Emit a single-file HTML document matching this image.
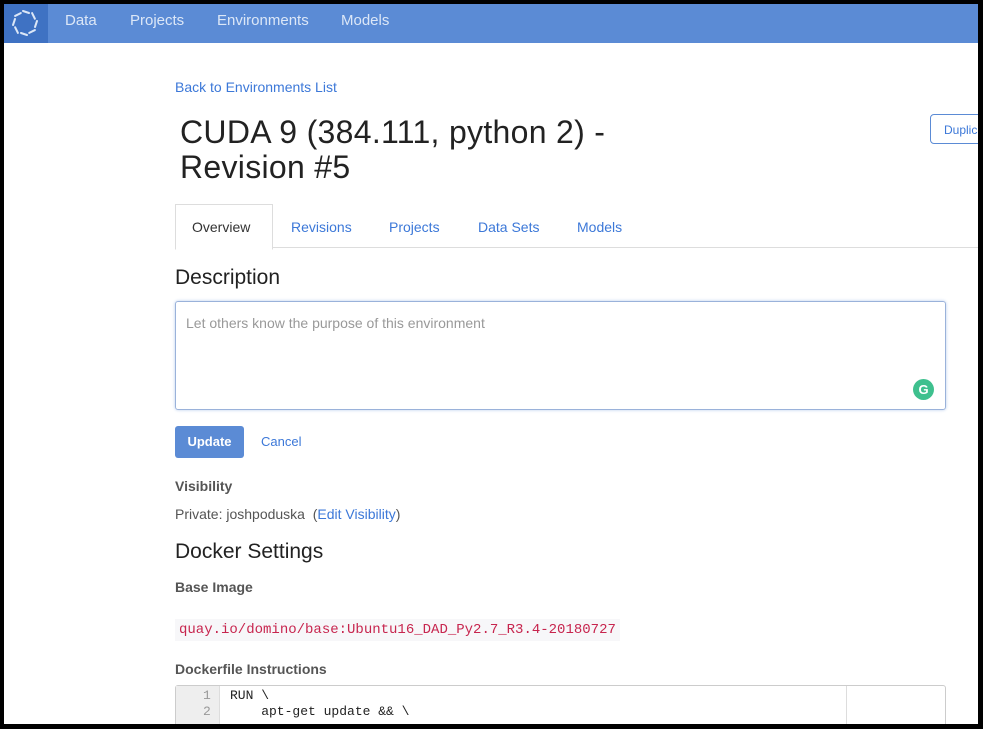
<!DOCTYPE html><html><head><style>
body{margin:0;width:983px;height:729px;background:#000;overflow:hidden;font-family:"Liberation Sans",sans-serif;position:relative}
.pg{position:absolute;left:4px;top:4px;width:974px;height:720px;background:#fff;overflow:hidden}
.nav{position:absolute;left:0;top:0;width:974px;height:39px;background:#5b8bd5}
.logo{position:absolute;left:0;top:0;width:44px;height:39px;background:#3f72c3}
.nav a{position:absolute;top:8px;color:#dce7f7;font-size:15px}
.a{position:absolute;white-space:nowrap}
h1{position:absolute;left:176px;top:111px;margin:0;font-weight:normal;font-size:32px;line-height:35px;color:#222;letter-spacing:0.3px}
.tabs{position:absolute;left:171px;top:243px;width:810px;border-top:1px solid #ddd}
.tab{position:absolute;top:215px;font-size:14px;color:#3c78d8}
.act{position:absolute;left:171px;top:200px;width:96px;height:44px;border:1px solid #ddd;border-bottom:1px solid #fff;background:#fff}
h2{position:absolute;margin:0;font-weight:normal;font-size:21px;color:#222}
.ta{position:absolute;left:171px;top:297px;width:769px;height:107px;border:1px solid #9ab2da;border-radius:3px;box-shadow:0 0 3px #b9ccec}
.lbl{font-size:14px;color:#555;font-weight:bold}
</style></head><body><div class="pg">
<div class="nav"><div class="logo"><svg width="44" height="39" viewBox="0 0 44 39"><g stroke="#dce7f7" stroke-width="2" stroke-linecap="round"><g id="s"><line x1="19" y1="7" x2="25" y2="9"/></g><use href="#s" transform="rotate(45 21 19)"/><use href="#s" transform="rotate(90 21 19)"/><use href="#s" transform="rotate(135 21 19)"/><use href="#s" transform="rotate(180 21 19)"/><use href="#s" transform="rotate(225 21 19)"/><use href="#s" transform="rotate(270 21 19)"/><use href="#s" transform="rotate(315 21 19)"/></g></svg></div>
<a style="left:61px">Data</a><a style="left:126px">Projects</a><a style="left:213px">Environments</a><a style="left:337px">Models</a></div>
<div class="a" style="left:171px;top:75px;font-size:14px;color:#3c78d8">Back to Environments List</div>
<h1>CUDA 9 (384.111, python 2) -<br>Revision #5</h1>
<div class="a" style="left:926px;top:110px;width:60px;height:30px;border:1px solid #5b8bd5;border-radius:4px;font-size:12px;color:#3c78d8;line-height:30px;padding-left:13px;box-sizing:border-box">Duplicate</div>
<div class="tabs"></div><div class="act"></div>
<div class="tab" style="left:188px;color:#333">Overview</div><div class="tab" style="left:287px">Revisions</div><div class="tab" style="left:385px">Projects</div><div class="tab" style="left:474px">Data Sets</div><div class="tab" style="left:573px">Models</div>
<h2 style="left:171px;top:262px">Description</h2>
<div class="ta"></div>
<div class="a" style="left:182px;top:311px;font-size:14px;color:#999">Let others know the purpose of this environment</div>
<div class="a" style="left:909px;top:375px;width:21px;height:21px;border-radius:50%;background:#3ec08e;color:#fff;font-size:13px;font-weight:bold;text-align:center;line-height:21px">G</div>
<div class="a" style="left:171px;top:422px;width:69px;height:32px;background:#5b8bd5;border-radius:3px;color:#fff;font-size:13px;font-weight:bold;text-align:center;line-height:32px">Update</div>
<div class="a" style="left:257px;top:430px;font-size:13px;color:#3c78d8">Cancel</div>
<div class="a lbl" style="left:171px;top:474px">Visibility</div>
<div class="a" style="left:171px;top:502px;font-size:14px;color:#555">Private: joshpoduska&nbsp; (<span style="color:#3c78d8">Edit Visibility</span>)</div>
<h2 style="left:171px;top:536px">Docker Settings</h2>
<div class="a lbl" style="left:171px;top:575px">Base Image</div>
<div class="a" style="left:171px;top:615px;background:#f7f7f9;padding:3px 4px;font-family:'Liberation Mono',monospace;font-size:14px;color:#c7254e">quay.io/domino/base:Ubuntu16_DAD_Py2.7_R3.4-20180727</div>
<div class="a lbl" style="left:171px;top:657px">Dockerfile Instructions</div>
<div class="a" style="left:171px;top:681px;width:769px;height:60px;border:1px solid #ccc;border-radius:3px;background:#fff"></div>
<div class="a" style="left:172px;top:682px;width:43px;height:60px;background:#eee;border-right:1px solid #ddd"></div>
<div class="a" style="left:842px;top:682px;height:60px;border-left:1px solid #ddd"></div>
<div class="a" style="left:199px;top:684px;font-family:'Liberation Mono',monospace;font-size:13px;color:#999;line-height:16px">1<br>2</div>
<div class="a" style="left:226px;top:684px;font-family:'Liberation Mono',monospace;font-size:13px;color:#222;line-height:16px;white-space:pre">RUN \
    apt-get update &amp;&amp; \</div>
</div></body></html>
